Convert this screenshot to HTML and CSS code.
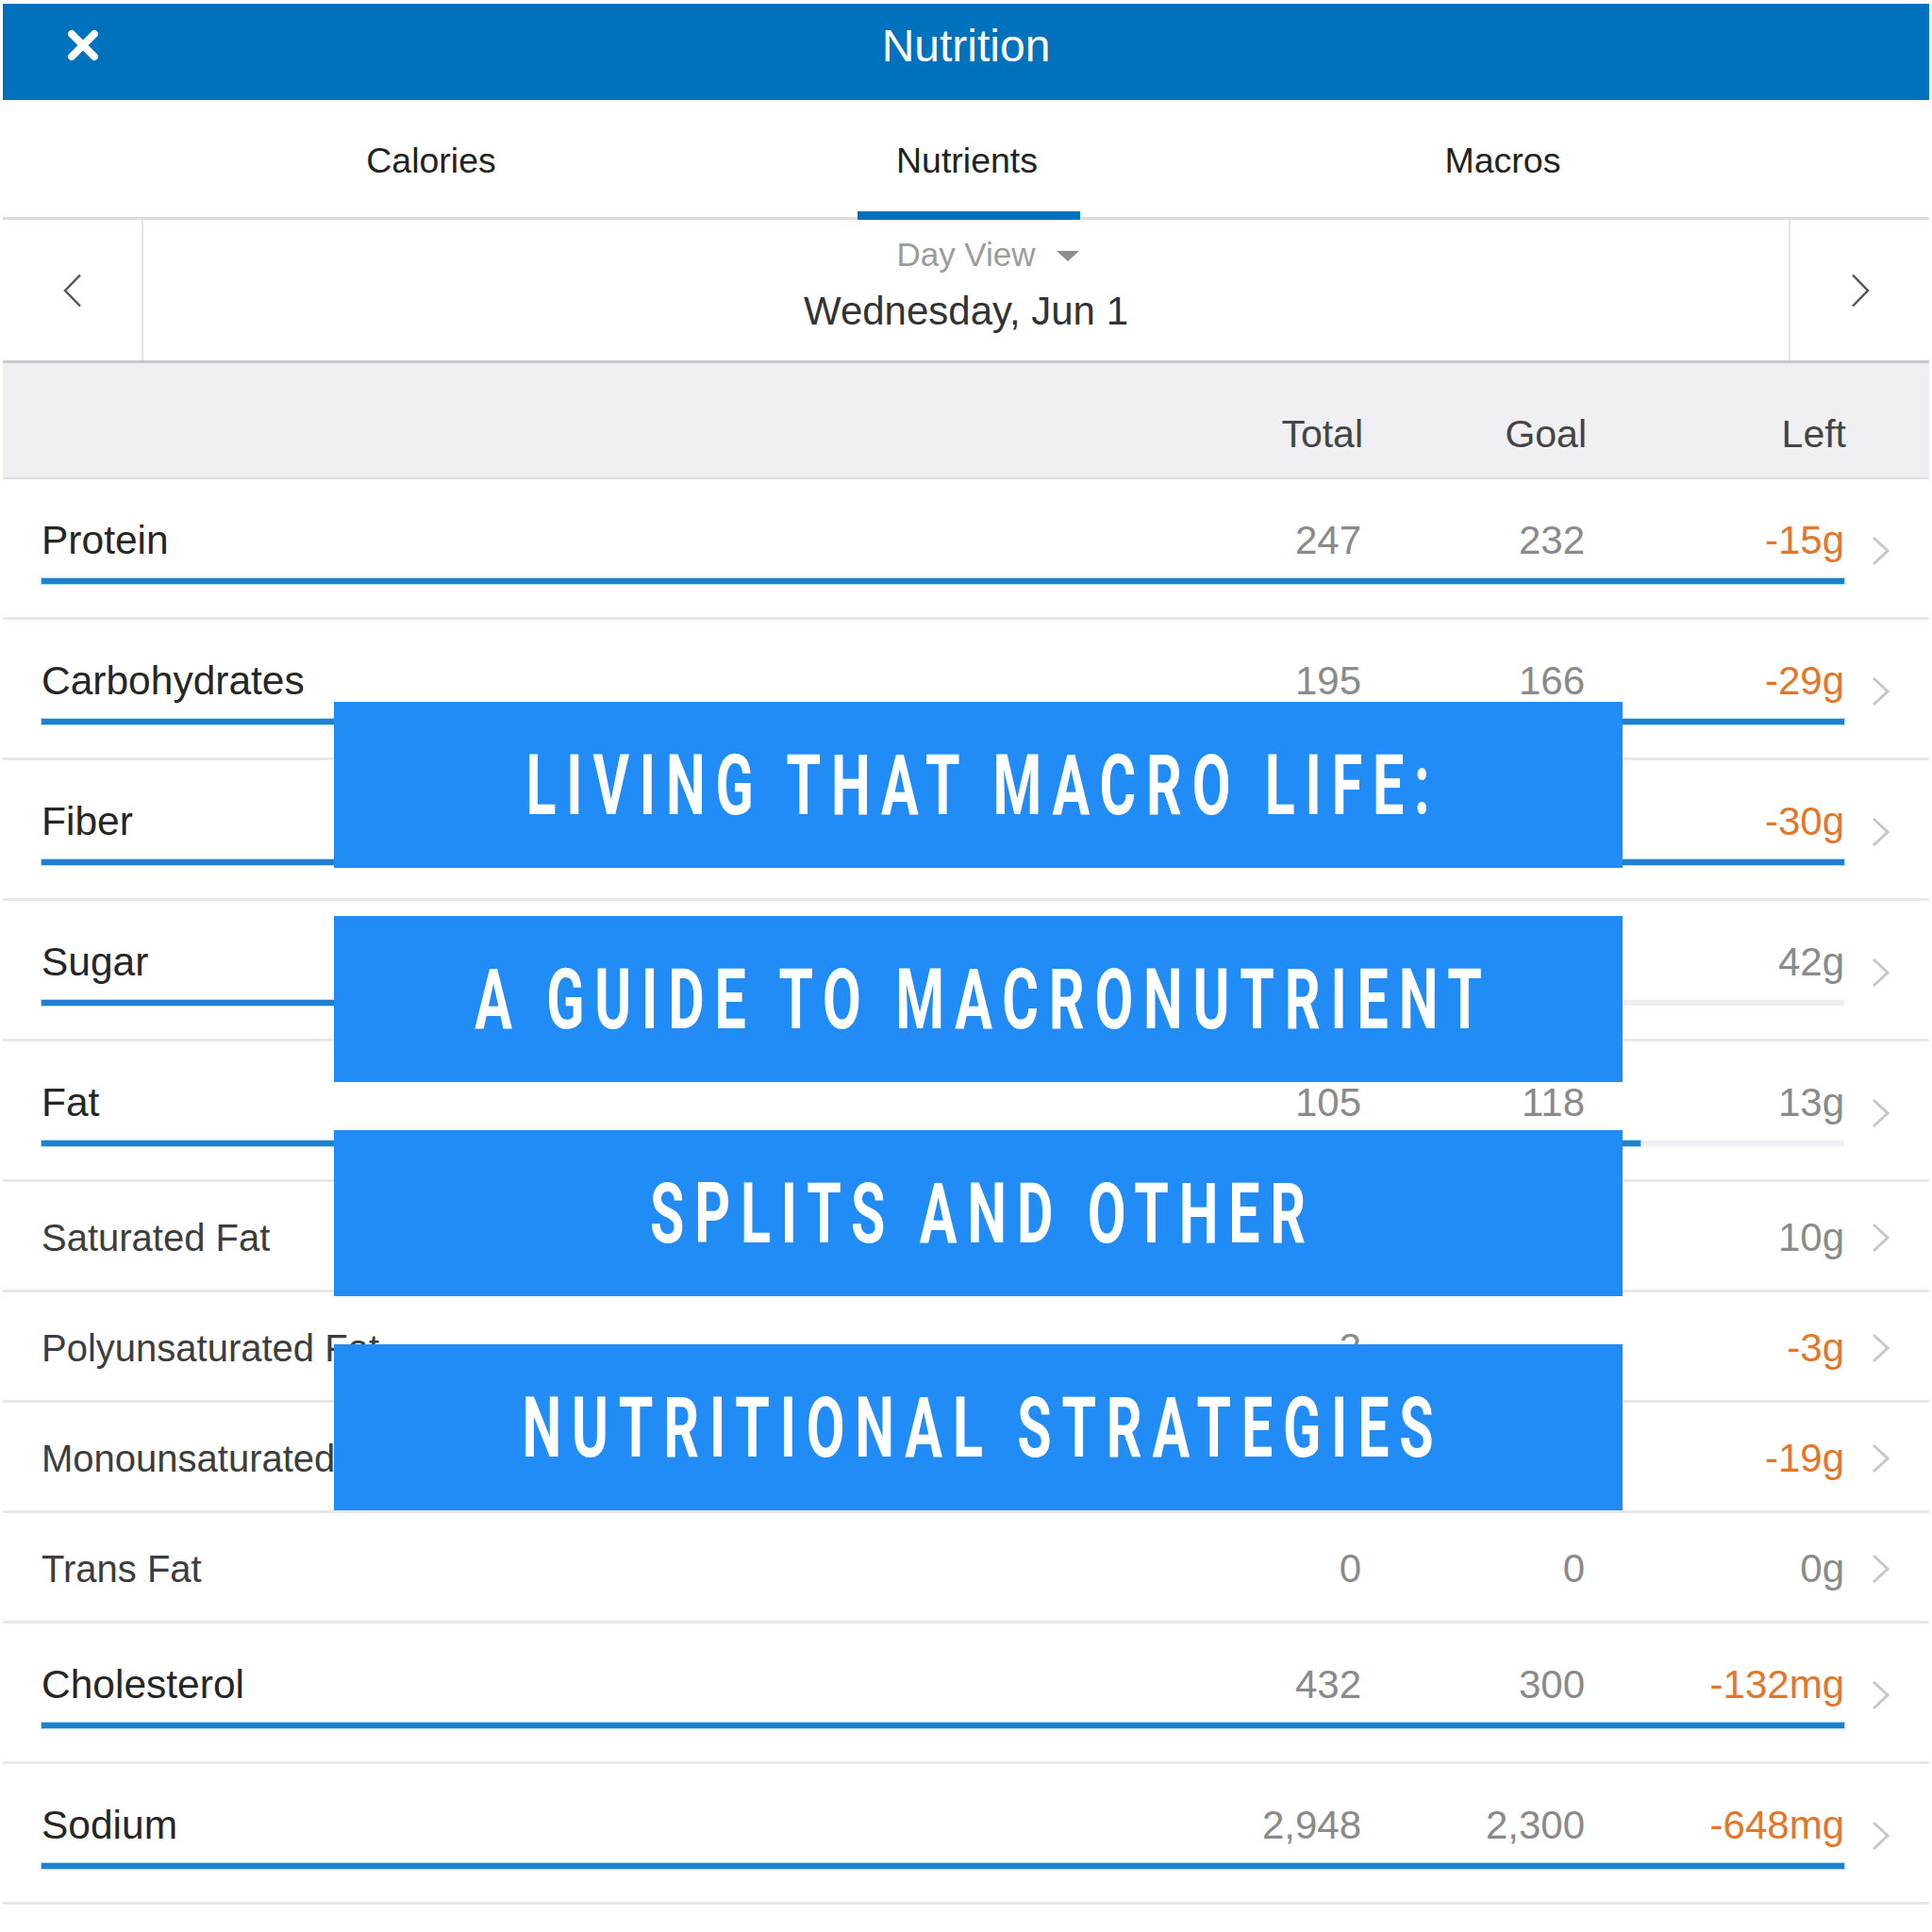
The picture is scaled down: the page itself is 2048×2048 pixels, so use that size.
FILE: index.html
```html
<!DOCTYPE html>
<html lang="en">
<head>
    <meta charset="UTF-8">
    <meta name="viewport" content="width=device-width, initial-scale=1.0">
    <title>Nutrition</title>
    <link rel="stylesheet" href="styles.css">
</head>
<body>
    <div class="app">
        <header class="topbar">
            <button class="close" aria-label="Close">
                <svg width="34" height="34" viewBox="0 0 34 34"><path d="M5 5 L29 29 M29 5 L5 29" stroke="#fff" stroke-width="8" stroke-linecap="round"/></svg>
            </button>
            <h1 class="title">Nutrition</h1>
            <span></span>
        </header>

        <nav class="tabs">
            <a class="tab">Calories</a>
            <a class="tab active">Nutrients</a>
            <a class="tab">Macros</a>
        </nav>

        <div class="datenav">
            <div class="navbtn prev">
                <svg width="22" height="36" viewBox="0 0 22 36"><polyline points="19,1.5 3,18 19,34.5" fill="none" stroke="#555" stroke-width="2.5"/></svg>
            </div>
            <div class="datebox">
                <div class="viewpick">Day View<span class="caret"></span></div>
                <div class="date">Wednesday, Jun 1</div>
            </div>
            <div class="navbtn next">
                <svg width="22" height="36" viewBox="0 0 22 36"><polyline points="3,1.5 19,18 3,34.5" fill="none" stroke="#555" stroke-width="2.5"/></svg>
            </div>
        </div>

        <div class="colhead">
            <span></span>
            <span>Total</span>
            <span>Goal</span>
            <span>Left</span>
            <span></span>
        </div>

        <div class="list">
            <div class="row big">
                <span class="name">Protein</span>
                <span class="num">247</span>
                <span class="num">232</span>
                <span class="left over">-15g</span>
                <svg class="chev" viewBox="0 0 21 32"><polyline points="3,2 18,16 3,30" fill="none" stroke="#c6c6cb" stroke-width="3"/></svg>
                <div class="track"><div class="fill" style="width:100%"></div></div>
            </div>
            <div class="row big">
                <span class="name">Carbohydrates</span>
                <span class="num">195</span>
                <span class="num">166</span>
                <span class="left over">-29g</span>
                <svg class="chev" viewBox="0 0 21 32"><polyline points="3,2 18,16 3,30" fill="none" stroke="#c6c6cb" stroke-width="3"/></svg>
                <div class="track"><div class="fill" style="width:100%"></div></div>
            </div>
            <div class="row big">
                <span class="name">Fiber</span>
                <span class="num"></span>
                <span class="num"></span>
                <span class="left over">-30g</span>
                <svg class="chev" viewBox="0 0 21 32"><polyline points="3,2 18,16 3,30" fill="none" stroke="#c6c6cb" stroke-width="3"/></svg>
                <div class="track"><div class="fill" style="width:100%"></div></div>
            </div>
            <div class="row big">
                <span class="name">Sugar</span>
                <span class="num"></span>
                <span class="num"></span>
                <span class="left">42g</span>
                <svg class="chev" viewBox="0 0 21 32"><polyline points="3,2 18,16 3,30" fill="none" stroke="#c6c6cb" stroke-width="3"/></svg>
                <div class="track"><div class="fill" style="width:47.5%"></div></div>
            </div>
            <div class="row big">
                <span class="name">Fat</span>
                <span class="num">105</span>
                <span class="num">118</span>
                <span class="left">13g</span>
                <svg class="chev" viewBox="0 0 21 32"><polyline points="3,2 18,16 3,30" fill="none" stroke="#c6c6cb" stroke-width="3"/></svg>
                <div class="track"><div class="fill" style="width:88.7%"></div></div>
            </div>
            <div class="row small">
                <span class="name">Saturated Fat</span>
                <span class="num"></span>
                <span class="num"></span>
                <span class="left">10g</span>
                <svg class="chev" viewBox="0 0 21 32"><polyline points="3,2 18,16 3,30" fill="none" stroke="#c6c6cb" stroke-width="3"/></svg>
            </div>
            <div class="row small">
                <span class="name">Polyunsaturated Fat</span>
                <span class="num">3</span>
                <span class="num"></span>
                <span class="left over">-3g</span>
                <svg class="chev" viewBox="0 0 21 32"><polyline points="3,2 18,16 3,30" fill="none" stroke="#c6c6cb" stroke-width="3"/></svg>
            </div>
            <div class="row small">
                <span class="name">Monounsaturated Fat</span>
                <span class="num"></span>
                <span class="num"></span>
                <span class="left over">-19g</span>
                <svg class="chev" viewBox="0 0 21 32"><polyline points="3,2 18,16 3,30" fill="none" stroke="#c6c6cb" stroke-width="3"/></svg>
            </div>
            <div class="row small">
                <span class="name">Trans Fat</span>
                <span class="num">0</span>
                <span class="num">0</span>
                <span class="left">0g</span>
                <svg class="chev" viewBox="0 0 21 32"><polyline points="3,2 18,16 3,30" fill="none" stroke="#c6c6cb" stroke-width="3"/></svg>
            </div>
            <div class="row big">
                <span class="name">Cholesterol</span>
                <span class="num">432</span>
                <span class="num">300</span>
                <span class="left over">-132mg</span>
                <svg class="chev" viewBox="0 0 21 32"><polyline points="3,2 18,16 3,30" fill="none" stroke="#c6c6cb" stroke-width="3"/></svg>
                <div class="track"><div class="fill" style="width:100%"></div></div>
            </div>
            <div class="row big">
                <span class="name">Sodium</span>
                <span class="num">2,948</span>
                <span class="num">2,300</span>
                <span class="left over">-648mg</span>
                <svg class="chev" viewBox="0 0 21 32"><polyline points="3,2 18,16 3,30" fill="none" stroke="#c6c6cb" stroke-width="3"/></svg>
                <div class="track"><div class="fill" style="width:100%"></div></div>
            </div>
        </div>

        <!-- title banner laid over the screenshot -->
        <div class="banner">
            <div class="strip"><span>LIVING THAT MACRO LIFE:</span></div>
            <div class="strip"><span>A GUIDE TO MACRONUTRIENT</span></div>
            <div class="strip"><span>SPLITS AND OTHER</span></div>
            <div class="strip"><span>NUTRITIONAL STRATEGIES</span></div>
        </div>
    </div>
</body>
</html>
```

FILE: styles.css
```css
body {
    margin: 0;
    background: #fff;
    font-family: "Liberation Sans", Arial, sans-serif;
}

.app {
    position: relative;
    padding: 4px 3px 0 3px;
}

/* top bar */
.topbar {
    display: grid;
    grid-template-columns: 1fr auto 1fr;
    align-items: center;
    height: 102px;
    box-sizing: border-box;
    padding-bottom: 14px;
    background: #0071bc;
}

.close {
    justify-self: start;
    display: flex;
    margin-left: 68px;
    padding: 0;
    border: none;
    background: none;
}

.title {
    margin: 0;
    font-size: 48px;
    font-weight: normal;
    color: #fff;
}

/* tabs */
.tabs {
    display: grid;
    grid-template-columns: repeat(3, 568px);
    height: 127px;
    box-sizing: border-box;
    padding: 4px 0 0 170px;
    border-bottom: 3px solid #dcdcdf;
}

.tab {
    position: relative;
    display: flex;
    align-items: center;
    justify-content: center;
    font-size: 37.5px;
    color: #222;
}

.tab.active::after {
    content: '';
    position: absolute;
    left: 50%;
    bottom: -3px;
    width: 236px;
    height: 9px;
    margin-left: -116px;
    background: #0071bc;
}

/* date navigation */
.datenav {
    display: grid;
    grid-template-columns: 149px 1fr 149px;
    height: 152px;
    box-sizing: border-box;
    border-bottom: 3px solid #c9c9cd;
}

.navbtn {
    display: flex;
    align-items: center;
    justify-content: center;
}

.navbtn.prev {
    border-right: 2px solid #e2e2e4;
}

.navbtn.next {
    border-left: 2px solid #e2e2e4;
}

.datebox {
    display: flex;
    flex-direction: column;
    align-items: center;
    justify-content: center;
    padding-bottom: 15px;
}

.viewpick {
    display: flex;
    align-items: center;
    line-height: 60px;
    font-size: 35px;
    color: #9b9b9b;
}

/* the caret hangs to the right so the label itself stays centred */
.caret {
    width: 0;
    height: 0;
    margin: 2px -46px 0 22px;
    border-left: 12px solid transparent;
    border-right: 12px solid transparent;
    border-top: 11px solid #8e8e8e;
}

.date {
    line-height: 60px;
    font-size: 42px;
    color: #333;
}

/* table */
.colhead,
.row {
    display: grid;
    grid-template-columns: 1fr 240px 237px 275px 90px;
    padding-left: 41px;
    box-sizing: border-box;
    align-items: center;
}

.colhead {
    height: 123px;
    padding-top: 30px;
    background: #efeff4;
    border-bottom: 2px solid #dedee2;
    font-size: 41px;
    color: #444;
}

.colhead span {
    margin-right: -2px;
    text-align: right;
}

.row {
    border-bottom: 3px solid #e7e7ea;
}

.row.big {
    height: 149px;
    grid-template-rows: 50px 6px;
    row-gap: 15px;
    align-content: start;
    padding-top: 40px;
}

.row.small {
    height: 117px;
    padding-top: 4px;
}

.name {
    font-size: 42.5px;
    color: #262626;
    white-space: nowrap;
}

.small .name {
    font-size: 40px;
    color: #3d3d3d;
}

.num,
.left {
    text-align: right;
    font-size: 42px;
    color: #8a8a8a;
}

.left.over {
    color: #e37629;
}

.chev {
    justify-self: start;
    width: 21px;
    height: 32px;
    margin-left: 28px;
}

.big .chev {
    grid-column: 5;
    grid-row: 1 / 3;
}

.track {
    grid-column: 1 / 5;
    grid-row: 2;
    height: 6px;
    background: #efeff3;
}

.fill {
    height: 100%;
    background: #1f80cd;
    box-shadow: 0 0 1px 1px rgba(90, 180, 235, 0.45);
}

/* banner */
.banner {
    position: absolute;
    top: 744px;
    left: 354px;
    width: 1366px;
    display: flex;
    flex-direction: column;
    gap: 51px;
}

.strip {
    height: 176px;
    display: flex;
    align-items: center;
    justify-content: center;
    overflow: hidden;
    background: #218cf6;
}

.strip span {
    display: inline-block;
    padding-left: 16px;
    font-family: Roboto, "Liberation Sans", sans-serif;
    font-weight: 700;
    font-size: 89px;
    line-height: 1;
    letter-spacing: 16.3px;
    color: #fff;
    white-space: nowrap;
    transform: scaleX(0.664);
}
```
